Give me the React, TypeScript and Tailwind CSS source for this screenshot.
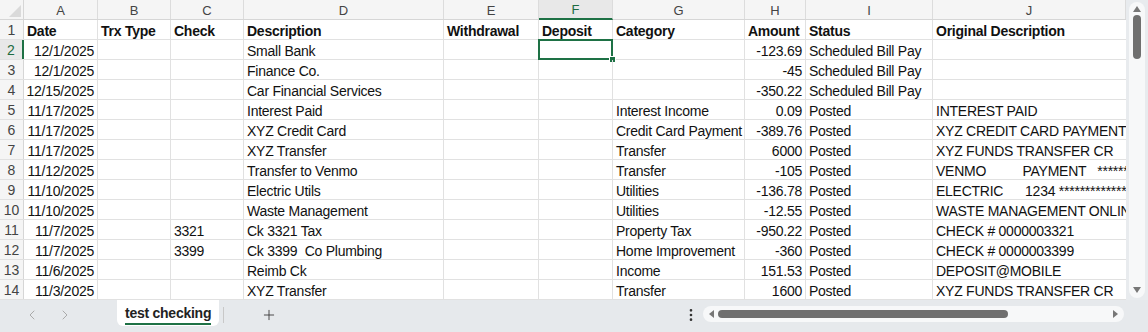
import { ChevronLeft, ChevronRight, Plus, EllipsisVertical } from "lucide-react";

const cols = ["A", "B", "C", "D", "E", "F", "G", "H", "I", "J"];
const widths = [74, 73, 73, 200, 95, 74, 132, 61, 127, 193];

type Row = [string, string, string, string, string, string, string, string, string, string];

const header: Row = ["Date", "Trx Type", "Check", "Description", "Withdrawal", "Deposit", "Category", "Amount", "Status", "Original Description"];

const rows: Row[] = [
  ["12/1/2025", "", "", "Small Bank", "", "", "", "-123.69", "Scheduled Bill Pay", ""],
  ["12/1/2025", "", "", "Finance Co.", "", "", "", "-45", "Scheduled Bill Pay", ""],
  ["12/15/2025", "", "", "Car Financial Services", "", "", "", "-350.22", "Scheduled Bill Pay", ""],
  ["11/17/2025", "", "", "Interest Paid", "", "", "Interest Income", "0.09", "Posted", "INTEREST PAID"],
  ["11/17/2025", "", "", "XYZ Credit Card", "", "", "Credit Card Payment", "-389.76", "Posted", "XYZ CREDIT CARD PAYMENT"],
  ["11/17/2025", "", "", "XYZ Transfer", "", "", "Transfer", "6000", "Posted", "XYZ FUNDS TRANSFER CR"],
  ["11/12/2025", "", "", "Transfer to Venmo", "", "", "Transfer", "-105", "Posted", "VENMO\u00a0\u00a0\u00a0\u00a0\u00a0\u00a0\u00a0\u00a0\u00a0\u00a0PAYMENT\u00a0\u00a0\u00a0**********"],
  ["11/10/2025", "", "", "Electric Utils", "", "", "Utilities", "-136.78", "Posted", "ELECTRIC\u00a0\u00a0\u00a0\u00a0\u00a0\u00a01234 ***************"],
  ["11/10/2025", "", "", "Waste Management", "", "", "Utilities", "-12.55", "Posted", "WASTE MANAGEMENT ONLINE PMT"],
  ["11/7/2025", "", "3321", "Ck 3321 Tax", "", "", "Property Tax", "-950.22", "Posted", "CHECK # 0000003321"],
  ["11/7/2025", "", "3399", "Ck 3399\u00a0\u00a0Co Plumbing", "", "", "Home Improvement", "-360", "Posted", "CHECK # 0000003399"],
  ["11/6/2025", "", "", "Reimb Ck", "", "", "Income", "151.53", "Posted", "DEPOSIT@MOBILE"],
  ["11/3/2025", "", "", "XYZ Transfer", "", "", "Transfer", "1600", "Posted", "XYZ FUNDS TRANSFER CR"],
];

const rightCols = new Set([0, 7]);

export default function App() {
  return (
    <div className="w-[1148px] h-[332px] bg-white overflow-hidden flex flex-col text-[14px] text-[#111]" style={{ fontFamily: '"Liberation Sans", Arial, sans-serif' }}>
      <div className="flex h-[300px]">
        {/* grid */}
        <div className="w-[1126px] overflow-hidden">
          {/* column headers */}
          <div className="flex h-[20px] bg-[#f5f5f5] border-b border-[#d6d6d6]">
            <div className="w-[24px] shrink-0 border-r border-[#d6d6d6] relative">
              <div className="absolute right-[2px] bottom-[2px] w-0 h-0 border-l-[12px] border-l-transparent border-b-[12px] border-b-[#dadada]" />
            </div>
            {cols.map((c, i) => (
              <div
                key={c}
                style={{ width: widths[i] }}
                className={`shrink-0 flex items-center justify-center pt-[2px] text-[13px] border-r border-[#dcdcdc] ${c === "F" ? "bg-[#e8e8e8] text-[#1e6b41] border-b-2 border-b-[#1e7145] -mb-px" : "text-[#444]"}`}
              >
                {c}
              </div>
            ))}
          </div>
          {[header, ...rows].map((r, ri) => (
            <div key={ri} className="flex h-[20px] border-b border-[#e1e1e1]">
              <div className={`w-[24px] shrink-0 flex items-center justify-center pt-[2px] text-[14px] border-r border-[#d6d6d6] ${ri === 1 ? "bg-[#e8e8e8] text-[#1e6b41] border-r-2 border-r-[#1e7145]" : "bg-[#f5f5f5] text-[#444]"}`}>
                {ri + 1}
              </div>
              {r.map((v, ci) => (
                <div
                  key={ci}
                  style={{ width: widths[ci] }}
                  className={`shrink-0 relative flex items-center pt-[3px] px-[3px] tracking-[-0.25px] whitespace-nowrap border-r border-[#e1e1e1] ${ri === 0 ? "font-bold" : ""} ${ri > 0 && rightCols.has(ci) ? "justify-end" : ""} ${ci === 9 ? "overflow-hidden border-r-0" : ""}`}
                >
                  {v}
                  {ri === 1 && ci === 5 && (
                    <div className="absolute -left-px -top-px -right-px -bottom-px border-2 border-[#1e7145]">
                      <div className="absolute -right-[5px] -bottom-[5px] w-[7px] h-[7px] bg-[#1e7145] border border-white" />
                    </div>
                  )}
                </div>
              ))}
            </div>
          ))}
        </div>
        {/* vertical scrollbar */}
        <div className="w-[22px] bg-[#e8ebee] flex justify-center pt-[2px]">
          <div className="w-[16px] h-[296px] bg-[#f7f8f9] rounded-full flex flex-col items-center pt-[4px]">
            <div className="w-0 h-0 border-l-[4px] border-l-transparent border-r-[4px] border-r-transparent border-b-[6px] border-b-[#777]" />
            <div className="w-[8px] h-[44px] bg-[#6f6f6f] rounded-full mt-[3px]" />
            <div className="flex-1" />
            <div className="w-0 h-0 border-l-[4px] border-l-transparent border-r-[4px] border-r-transparent border-t-[6px] border-t-[#777] mb-[5px]" />
          </div>
        </div>
      </div>
      {/* bottom bar */}
      <div className="flex-1 bg-[#e6e9ec] flex items-start relative">
        <div className="flex items-center gap-[17px] pl-[24px] h-[30px] text-[#aaa]">
          <ChevronLeft size={16} strokeWidth={1.5} />
          <ChevronRight size={16} strokeWidth={1.5} />
        </div>
        <div className="ml-[44px] h-[26px] bg-white rounded-b-[6px] px-[8px] pt-[2px] flex flex-col items-center justify-center">
          <span className="font-bold text-[14px] text-[#222] leading-[18px] tracking-[-0.25px]">test checking</span>
          <div className="h-[2px] w-full bg-[#1e7145] mt-[1px]" />
        </div>
        <div className="w-px h-[16px] bg-[#c8c8c8] mt-[7px] ml-[4px]" />
        <div className="ml-[37px] h-[30px] flex items-center text-[#333]">
          <Plus size={16} strokeWidth={1.3} />
        </div>
        <div className="absolute left-[683px] top-[7px] text-[#333]">
          <EllipsisVertical size={16} strokeWidth={2} />
        </div>
        <div className="absolute left-[703px] top-[6px] w-[421px] h-[16px] bg-[#f7f8f9] rounded-full flex items-center px-[6px] gap-[4px]">
          <div className="w-0 h-0 border-t-[4px] border-t-transparent border-b-[4px] border-b-transparent border-r-[5px] border-r-[#777]" />
          <div className="w-[290px] h-[8px] bg-[#6f6f6f] rounded-full" />
          <div className="flex-1" />
          <div className="w-0 h-0 border-t-[4px] border-t-transparent border-b-[4px] border-b-transparent border-l-[5px] border-l-[#777]" />
        </div>
      </div>
    </div>
  );
}
